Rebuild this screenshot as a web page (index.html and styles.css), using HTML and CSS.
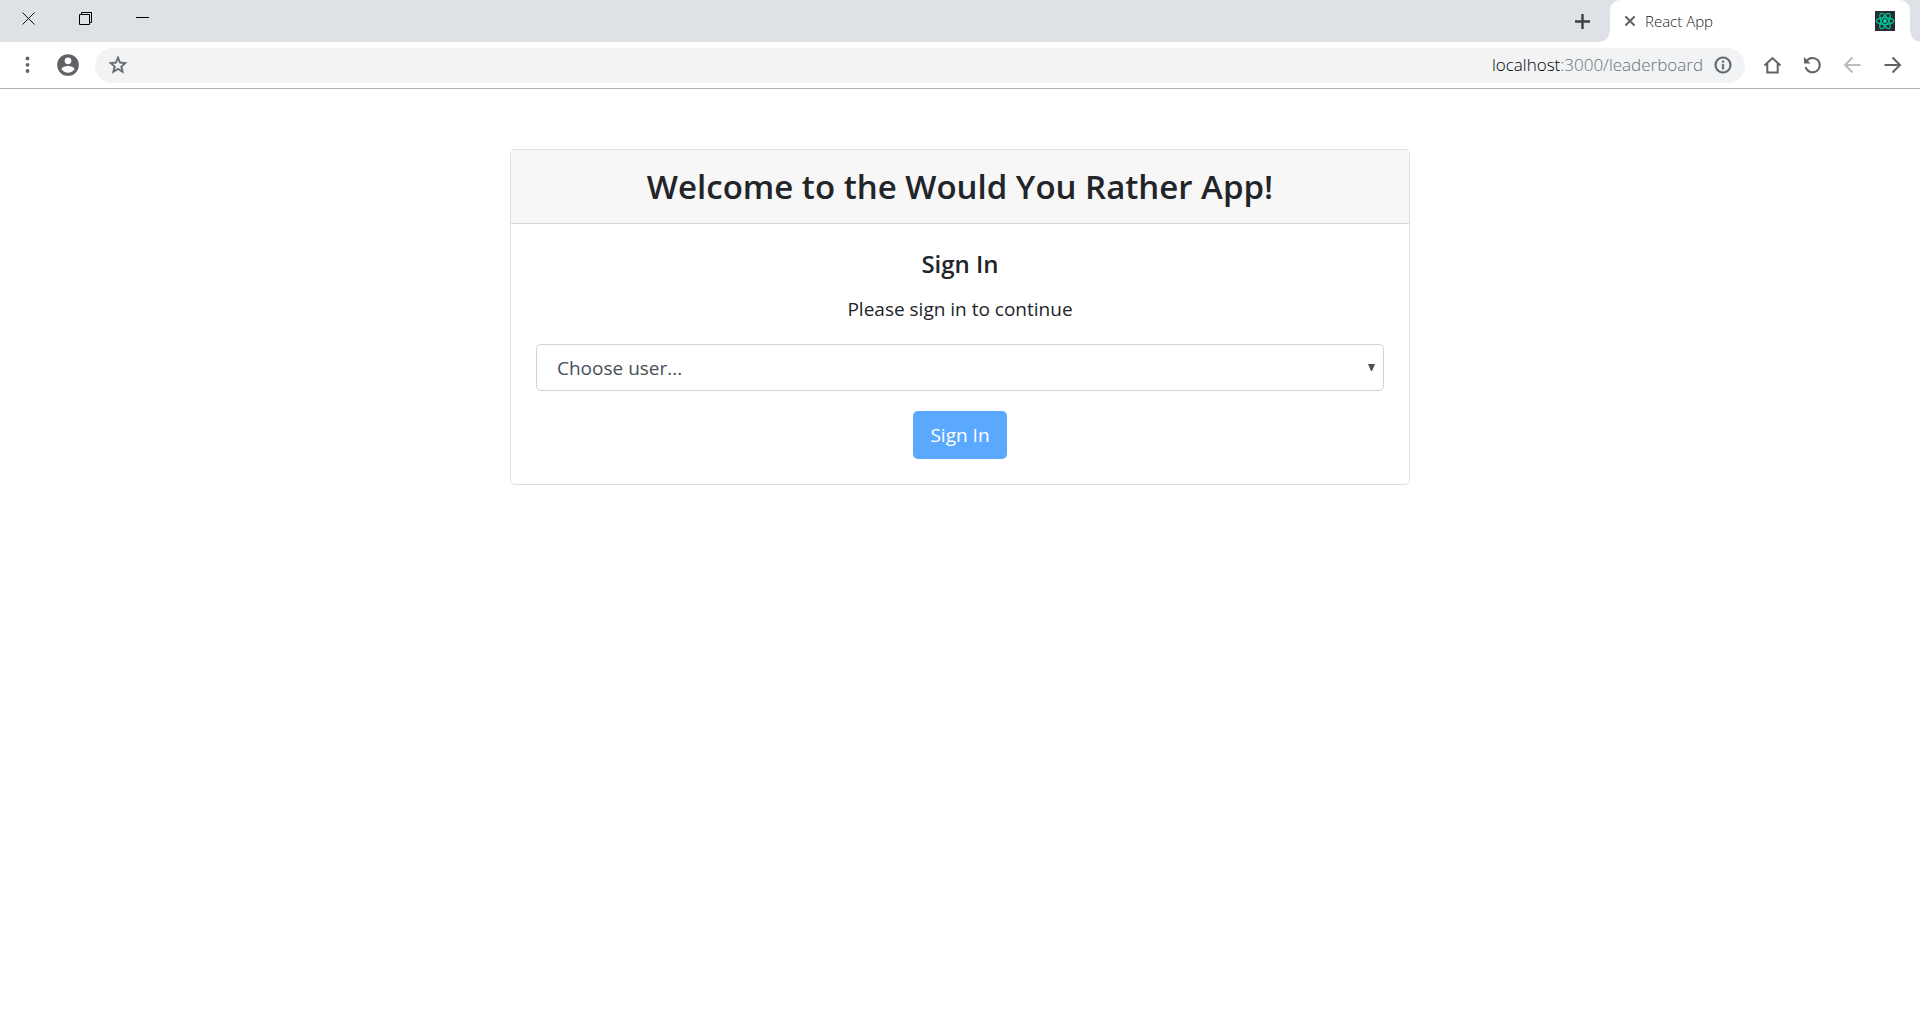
FILE: index.html
```html
<!DOCTYPE html>
<html lang="en">
<head>
<meta charset="utf-8">
<title>React App</title>
<link rel="stylesheet" href="styles.css">
</head>
<body>
<header class="browser">
  <div class="tabstrip">
    <div class="window-controls">
      <button class="win" type="button" aria-label="Close"><svg width="13" height="13" viewBox="0 0 13 13"><path d="M.5.5l12 12M12.500.5l-12 12" stroke="#111" fill="none"/></svg></button>
      <button class="win" type="button" aria-label="Restore"><svg width="13" height="13" viewBox="0 0 13 13"><path d="M.5 2.500h10v10H.5zM2.500 2.500v-2h10v10h-2" stroke="#000" fill="none"/></svg></button>
      <button class="win" type="button" aria-label="Minimize"><svg width="13" height="13" viewBox="0 0 13 13"><path d="M0 5.500h13" stroke="#000" fill="none"/></svg></button>
    </div>
    <button class="new-tab" type="button" aria-label="New tab"><svg width="15" height="15" viewBox="0 0 15 15"><path d="M7.500 0v15M0 7.500h15" stroke="#3c4043" stroke-width="2.400" fill="none"/></svg></button>
    <div class="tab">
      <button class="tab-close" type="button" aria-label="Close tab"><svg width="10" height="10" viewBox="0 0 10 10"><path d="M.4.4l9.200 9.200M9.600.4L.4 9.600" stroke="#5f6368" stroke-width="2" fill="none"/></svg></button>
      <span class="tab-title">React App</span>
      <svg class="favicon" width="20" height="20" viewBox="0 0 20 20"><path fill="#282c34" d="M0 0h20v20H0z"/><g fill="none" stroke="#00c896" stroke-width="1.200"><ellipse cx="10" cy="10" rx="8.700" ry="3.400"/><ellipse cx="10" cy="10" rx="8.700" ry="3.400" transform="rotate(60 10 10)"/><ellipse cx="10" cy="10" rx="8.700" ry="3.400" transform="rotate(120 10 10)"/></g><circle cx="10" cy="10" r="1.900" fill="#00d8a0"/></svg>
    </div>
    <div class="strip-end"></div>
  </div>
  <div class="toolbar">
    <button class="tool" type="button" aria-label="Menu"><svg width="24" height="24" viewBox="0 0 24 24" fill="#5f6368"><circle cx="11.500" cy="5.500" r="1.900"/><circle cx="11.500" cy="11.800" r="1.900"/><circle cx="11.500" cy="18" r="1.900"/></svg></button>
    <button class="tool" type="button" aria-label="Profile"><svg width="26" height="26" viewBox="0 0 24 24" fill="#5f6368"><path d="M12 2a10 10 0 1 0 0 20 10 10 0 0 0 0-20zm0 3a3.100 3.100 0 1 1 0 6.200A3.100 3.100 0 0 1 12 5zm0 14.200a7.200 7.200 0 0 1-6-3.220c.03-2 4-3.080 6-3.080s5.970 1.090 6 3.080a7.200 7.200 0 0 1-6 3.220z"/></svg></button>
    <div class="omnibox">
      <button class="icon" type="button" aria-label="Bookmark"><svg width="22" height="22" viewBox="0 0 24 24" fill="#5f6368" stroke="#5f6368" stroke-width=".4"><path d="M22 9.240l-7.190-.62L12 2 9.190 8.630 2 9.240l5.460 4.730L5.820 21 12 17.270 18.180 21l-1.630-7.030L22 9.240zM12 15.400l-3.760 2.270 1-4.280-3.320-2.880 4.380-.38L12 6.100l1.710 4.040 4.380.38-3.320 2.880 1 4.280L12 15.400z"/></svg></button>
      <a class="url" href="#"><span class="host">localhost</span>:3000/leaderboard</a>
      <button class="icon" type="button" aria-label="Site information"><svg width="20" height="20" viewBox="0 0 24 24" fill="#5f6368" stroke="#5f6368" stroke-width=".5"><path d="M11 7h2v2h-2zm0 4h2v6h-2zm1-9a10 10 0 1 0 0 20 10 10 0 0 0 0-20zm0 18a8 8 0 1 1 0-16 8 8 0 0 1 0 16z"/></svg></button>
    </div>
    <button class="tool" type="button" aria-label="Home"><svg width="20" height="20" viewBox="0 0 20 20"><path d="M2.500 10.500l8-7.500 8 7.500M5.300 8.500v9h10.400v-9" stroke="#5f6368" stroke-width="2" fill="none"/></svg></button>
    <button class="tool" type="button" aria-label="Reload"><svg width="20" height="20" viewBox="0 0 20 20"><path d="M4.500 6.200a7.200 7.200 0 1 1-.9 5.800" stroke="#5f6368" stroke-width="2" fill="none"/><path d="M2 2v6.500h6.500z" fill="#5f6368"/></svg></button>
    <button class="tool" type="button" aria-label="Back"><svg width="20" height="20" viewBox="0 0 20 20"><path d="M18.500 10H3.500M10.500 2.500L3 10l7.500 7.500" stroke="#babcbe" stroke-width="2" fill="none"/></svg></button>
    <button class="tool" type="button" aria-label="Forward"><svg width="20" height="20" viewBox="0 0 20 20"><path d="M2.500 10h15M10.500 2.500L18 10l-7.500 7.500" stroke="#5f6368" stroke-width="2" fill="none"/></svg></button>
  </div>
</header>
<main class="page">
  <section class="card">
    <h1 class="card-header">Welcome to the Would You Rather App!</h1>
    <form class="card-body">
      <h2 class="card-title">Sign In</h2>
      <label class="card-text" for="user">Please sign in to continue</label>
      <div class="select-wrap">
        <select class="select" id="user"><option>Choose user...</option></select>
        <svg class="arrow" width="7" height="7" viewBox="0 0 7 7"><path d="M0 0h7L4 7H3z" fill="#495057"/></svg>
      </div>
      <button class="submit" type="submit" disabled>Sign In</button>
    </form>
  </section>
</main>
</body>
</html>
```
FILE: styles.css
```css
* { box-sizing: border-box; }
body {
  margin: 0;
  background: #fff;
  color: #212529;
  font-family: "Segoe UI", "Open Sans", "Noto Sans", sans-serif;
  font-size: 19px;
  line-height: 30px;
}
button { padding: 0; border: 0; background: none; font: inherit; }
svg { display: block; }

.browser { border-bottom: 1px solid #b1b3b5; }
.tabstrip { display: flex; height: 42px; background: #dee1e6; }
.window-controls { display: flex; flex: 1; }
.win { display: grid; place-items: center; width: 57px; height: 37px; }
.new-tab { display: grid; place-items: center; width: 55px; }
.tab {
  position: relative;
  display: flex;
  align-items: center;
  gap: 10px;
  width: 300px;
  padding: 0 15px;
  border-radius: 10px 10px 0 0;
  background: #fff;
}
.tab::before, .tab::after {
  content: "";
  position: absolute;
  bottom: 0;
  width: 10px;
  height: 10px;
}
.tab::before { right: 100%; background: radial-gradient(circle at 0 0, transparent 9px, #fff 10px); }
.tab::after { left: 100%; background: radial-gradient(circle at 100% 0, transparent 9px, #fff 10px); }
.tab-title { flex: 1; font-size: 15px; font-weight: 300; color: #202124; }
.strip-end { width: 10px; }

.toolbar { display: flex; align-items: center; height: 46px; padding: 0 8px; }
.tool { display: grid; place-items: center; width: 40px; height: 40px; }
.omnibox {
  display: flex;
  flex: 1;
  align-items: center;
  gap: 10px;
  height: 35px;
  margin: 0 7px;
  padding: 0 12px;
  border-radius: 18px;
  background: #f1f3f4;
}
.url { flex: 1; text-align: right; font-size: 17px; font-weight: 300; color: #6b7075; text-decoration: none; }
.host { color: #000; }

.page { padding: 60px 20px; }
.card { max-width: 900px; margin: 0 auto; border: 1px solid #dfdfdf; border-radius: 5px; text-align: center; }
.card-header {
  margin: 0;
  padding: 15px 25px;
  border-bottom: 1px solid #d8d8d8;
  border-radius: 4px 4px 0 0;
  background: #f7f7f7;
  font-size: 33px;
  font-weight: 600;
  line-height: 43px;
}
.card-body { display: flex; flex-direction: column; align-items: center; padding: 25px; }
.card-title { margin: 0 0 15px; font-size: 24px; font-weight: 600; line-height: 30px; }
.card-text { margin-bottom: 20px; }
.select-wrap { position: relative; width: 100%; margin-bottom: 20px; }
.select {
  display: block;
  width: 100%;
  height: 47px;
  padding: 0 20px;
  border: 1px solid #ced4da;
  border-radius: 5px;
  background: #fff;
  color: #495057;
  font: inherit;
  appearance: none;
}
.arrow { position: absolute; top: 20px; right: 9px; pointer-events: none; }
.submit { height: 48px; padding: 0 17px; border-radius: 5px; background: #5aa9ff; color: #fff; }
```
